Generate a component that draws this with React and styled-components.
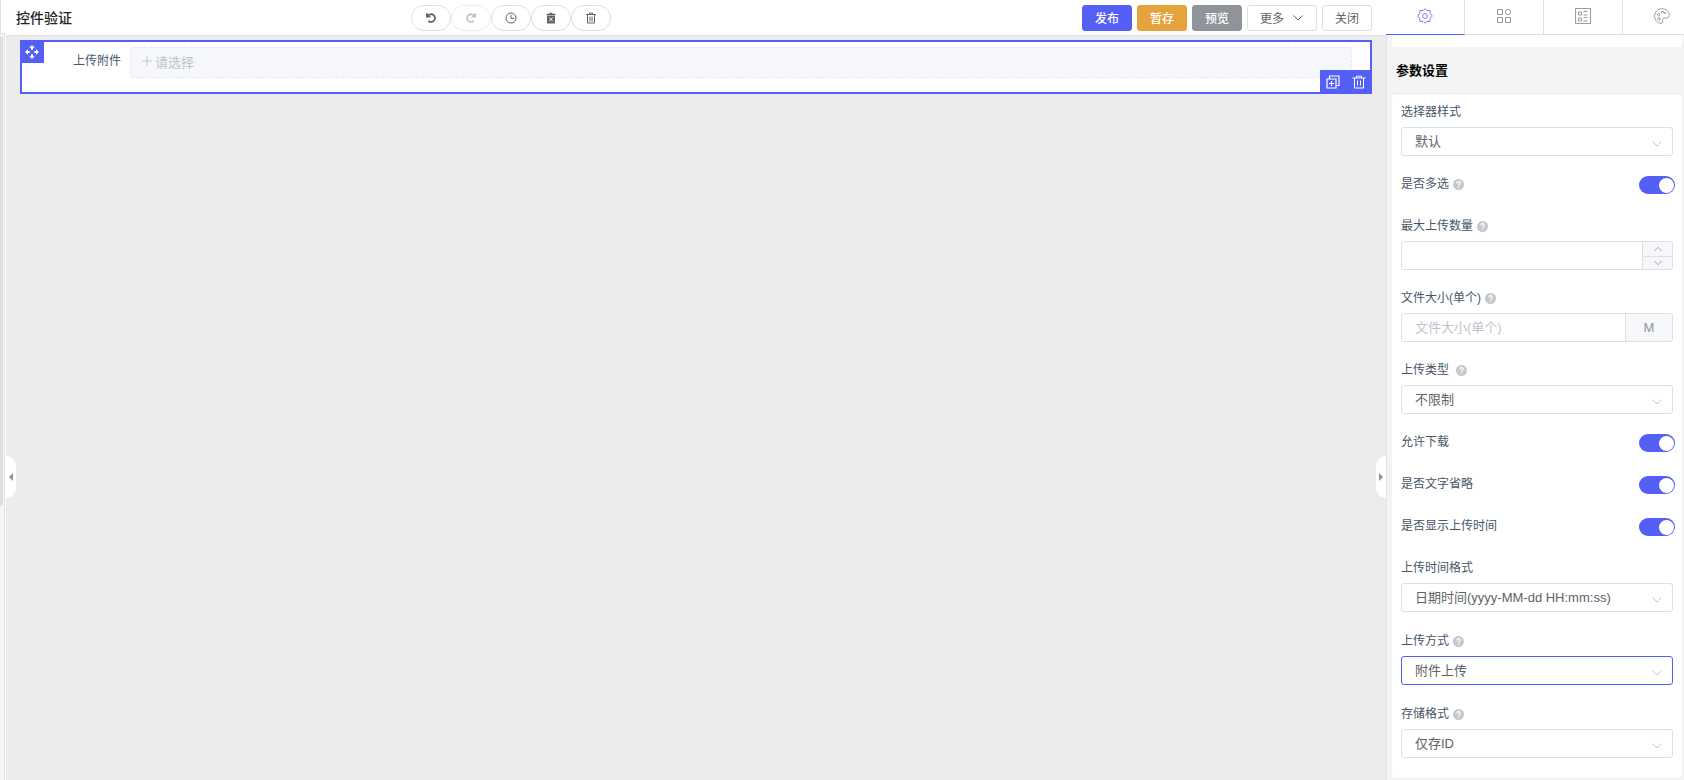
import React, { useState, useId } from "react";
import styled, { createGlobalStyle, css } from "styled-components";

const Global = createGlobalStyle`
  *, *::before, *::after { box-sizing: border-box; }
  body { margin: 0; font-family: "Liberation Sans", "Noto Sans CJK SC", sans-serif; font-size: 12px; color: #606266; }
  button, input, select { font-family: inherit; margin: 0; }
  h1, h2 { margin: 0; }
`;

const primary = "#535ff5";
const line = "#dcdfe6";

const Page = styled.div`
  display: grid;
  grid-template-columns: 6px minmax(0, 1fr) 298px;
  height: 100vh;
  overflow: hidden;
  background: #ececec;
`;

const LeftRail = styled.div`
  display: flex;
  flex-direction: column;
  background: #fff;
`;
const RailTop = styled.div`
  flex: none;
  height: 34px;
  border-left: 1px solid #e0e3ef;
  border-bottom: 1px solid #e0e3ef;
`;
const RailTrack = styled.div`
  flex: 1;
  margin-right: 1px;
  padding-top: 2px;
  border-right: 1px solid #e0e3ef;
  background: #f4f5f8;
`;
const RailThumb = styled.div`
  height: 470px;
  width: 3px;
  border-radius: 0 3px 3px 0;
  background: #dfdfe2;
`;

const Main = styled.main`
  position: relative;
  display: flex;
  flex-direction: column;
  min-width: 0;
`;

const Toolbar = styled.header`
  display: grid;
  grid-template-columns: 395px auto 1fr;
  align-items: center;
  height: 36px;
  padding: 0 14px 0 10px;
  background: #fff;
  border-bottom: 1px solid #e4e4e4;
`;
const Title = styled.h1`
  font-size: 14px;
  line-height: 20px;
  font-weight: 500;
  color: #222;
`;
const History = styled.div`
  display: flex;
`;
const Pill = styled.button`
  display: grid;
  place-items: center;
  width: 40px;
  height: 26px;
  padding: 0;
  border: 1px solid ${(p) => (p.disabled ? "#ebeef5" : line)};
  border-radius: 13px;
  background: #fff;
  color: ${(p) => (p.disabled ? "#c0c4cc" : "#606266")};
`;
const Actions = styled.div`
  display: flex;
  justify-content: flex-end;
  gap: 5px;
`;
const tones = { primary, warning: "#e6a23c", info: "#909399" };
const Action = styled.button`
  display: flex;
  align-items: center;
  justify-content: center;
  gap: 8px;
  height: 26px;
  padding: 0 12px;
  border: 1px solid ${(p) => tones[p.$tone] || line};
  border-radius: 3px;
  background: ${(p) => tones[p.$tone] || "#fff"};
  color: ${(p) => (p.$tone ? "#fff" : "#606266")};
  font-size: 12px;
  font-weight: ${(p) => (p.$tone ? 500 : 400)};
`;

const Canvas = styled.section`
  flex: 1;
  padding: 4px 14px;
`;
const Widget = styled.div`
  position: relative;
  display: flex;
  align-items: flex-start;
  height: 54px;
  padding: 5px 18px 0 51px;
  border: 2px solid ${primary};
  background: #fff;
`;
const WidgetLabel = styled.label`
  flex: none;
  width: 57px;
  line-height: 28px;
  color: #475669;
`;
const Picker = styled.button`
  flex: 1;
  display: flex;
  align-items: center;
  gap: 2px;
  height: 31px;
  padding: 0 10px 3px;
  border: 1px dashed #e4e7ed;
  border-radius: 4px;
  background: #f5f7fa;
  color: #c0c4cc;
  font-size: 13px;
`;
const DragHandle = styled.button`
  position: absolute;
  top: -2px;
  left: -2px;
  display: grid;
  place-items: center;
  width: 24px;
  height: 23px;
  padding: 0;
  border: 0;
  background: ${primary};
  color: #fff;
`;
const WidgetTools = styled.div`
  position: absolute;
  right: -2px;
  bottom: -2px;
  display: flex;
  background: ${primary};
`;
const Tool = styled.button`
  display: grid;
  place-items: center;
  width: 26px;
  height: 24px;
  padding: 0;
  border: 0;
  background: none;
  color: #fff;
`;

const Fold = styled.button`
  position: absolute;
  top: calc(50% + 87px);
  ${(p) => (p.$side === "left" ? "left: 0; border-radius: 0 10px 10px 0;" : "right: 0; border-radius: 10px 0 0 10px;")}
  transform: translateY(-50%);
  display: grid;
  place-items: center;
  width: 10px;
  height: 42px;
  padding: 0;
  border: 0;
  background: #fff;
  color: #909399;
`;

const Panel = styled.aside`
  display: flex;
  flex-direction: column;
  min-width: 0;
  height: 100vh;
  overflow: hidden;
  background: #f4f4f4;
`;
const Tabs = styled.div`
  flex: none;
  display: flex;
  height: 35px;
  background: #fff;
`;
const Tab = styled.button`
  flex: none;
  display: grid;
  place-items: center;
  width: 79px;
  padding: 0 0 2px;
  border: 0;
  border-right: 1px solid ${line};
  border-bottom: 1px solid ${(p) => (p.$active ? primary : line)};
  background: #fff;
  color: ${(p) => (p.$active ? "#7780f7" : "#9a9ca2")};
`;
const PanelBody = styled.div`
  flex: 1;
  padding: 0 2px 0 5px;
  border-left: 1px solid #e2e4f0;
  overflow: hidden;
`;
const CardEnd = styled.div`
  height: 12px;
  border-radius: 0 0 4px 4px;
  background: #fff;
`;
const Heading = styled.h2`
  height: 47px;
  padding-left: 4px;
  border-bottom: 1px solid #ebebeb;
  font-size: 13px;
  font-weight: 700;
  line-height: 48px;
  color: #000;
`;
const Card = styled.form`
  display: flex;
  flex-direction: column;
  padding: 8px 9px 20px;
  border-radius: 4px;
  background: #fff;
`;
const Field = styled.div`
  height: ${(p) => p.$h || 72}px;
`;
const LabelLine = styled.div`
  display: flex;
  align-items: center;
  gap: 4px;
  height: 20px;
  margin-bottom: 5px;
  color: #475669;
  label { line-height: 20px; }
`;
const SwitchRow = styled.div`
  display: flex;
  justify-content: space-between;
  align-items: flex-start;
  height: 42px;
  margin-right: -2px;
`;
const boxed = css`
  width: 100%;
  height: 29px;
  border: 1px solid ${(p) => (p.$active ? primary : line)};
  border-radius: 3px;
  background: #fff;
`;
const SelectBox = styled.div`
  display: grid;
  align-items: center;
  > * { grid-area: 1 / 1; }
  > svg { justify-self: end; margin: 4px 10px 0 0; color: #c0c4cc; pointer-events: none; }
`;
const Select = styled.select`
  ${boxed}
  appearance: none;
  padding: 0 30px 0 13px;
  color: #606266;
  font-size: 13px;
  outline: none;
`;
const Group = styled.div`
  ${boxed}
  display: flex;
  overflow: hidden;
`;
const Input = styled.input`
  flex: 1;
  min-width: 0;
  padding: 0 13px;
  border: 0;
  outline: none;
  background: #fff;
  color: #606266;
  font-size: 13px;
  &::placeholder { color: #c0c4cc; opacity: 1; }
`;
const Unit = styled.span`
  display: grid;
  place-items: center;
  width: 47px;
  border-left: 1px solid ${line};
  background: #f5f7fa;
  color: #909399;
  font-size: 13px;
`;
const Steps = styled.div`
  display: grid;
  grid-template-rows: 1fr 1fr;
  width: 30px;
  border-left: 1px solid ${line};
  background: #f5f7fa;
`;
const Step = styled.button`
  display: grid;
  place-items: center;
  padding: 0;
  border: 0;
  background: none;
  color: #909399;
  & + & { border-top: 1px solid ${line}; }
`;
const Switch = styled.input`
  appearance: none;
  flex: none;
  width: 36px;
  height: 18px;
  margin: 2px 0 0;
  padding: 2px 1px 1px 2px;
  border-radius: 9px;
  background: ${line};
  &::before {
    content: "";
    display: block;
    width: 15px;
    height: 15px;
    border-radius: 50%;
    background: #fff;
  }
  &:checked { background: ${primary}; }
  &:checked::before { margin-left: auto; }
`;

const Svg = ({ size = 12, box = 16, children, w = 1 }) => (
  <svg width={size} height={size} viewBox={`0 0 ${box} ${box}`} fill="none" stroke="currentColor" strokeWidth={w} aria-hidden="true">
    {children}
  </svg>
);
const Chevron = ({ up, size = 12 }) => (
  <Svg size={size} box={12}><path d={up ? "M1.5 8.5 6 4l4.500 4.500" : "M1.5 3.5 6 8l4.500-4.500"} /></Svg>
);
const Undo = () => (
  <Svg size={12} box={12} w={1.7}><path d="M1.800 1.200v3.400h3.600M2.200 4.400C3 2.900 4.400 2.200 6.200 2.200a3.900 3.900 0 1 1-2.800 6.800" /></Svg>
);
const Redo = () => (
  <Svg size={12} box={12} w={1.7}><path d="M10.200 1.200v3.400H6.600M9.800 4.400C9 2.900 7.600 2.200 5.800 2.200a3.900 3.900 0 1 0 2.800 6.800" /></Svg>
);
const Clock = () => (
  <Svg box={12}><circle cx="6" cy="6" r="5" /><path d="M6 2.8V6.4h3.2" /></Svg>
);
const Clear = () => (
  <Svg box={12}>
    <path d="M2 3.500h8v8H2zM1.500 1.800h9V3h-9zM4.500.8h3v1h-3z" fill="currentColor" stroke="none" />
    <path d="m4.200 5.500 3.600 3.800m0-3.800L4.200 9.300" stroke="#fff" />
  </Svg>
);
const TrashLight = () => (
  <Svg box={12}>
    <path d="M1 2.500h10M4.500 2.500v-1.500h3v1.500M2.500 2.500v8.500h7v-8.500" />
    <path d="M4.700 4.500v5M6 4.500v5M7.300 4.500v5" strokeWidth="0.7" />
  </Svg>
);
const Trash = ({ size = 14 }) => (
  <Svg size={size} box={14}><path d="M.5 3h13M4.500 3V1.200h5V3M2.500 3v10h9V3M5.500 5.500v5M8.500 5.500v5" /></Svg>
);
const Move = () => (
  <Svg size={14} box={14}>
    <path fill="currentColor" stroke="none" d="M7 0l2.800 3H8v1.800H6V3H4.200zM7 14l2.800-3H8V9.200H6V11H4.200zM0 7l3-2.800V6h1.800v2H3v1.800zM14 7l-3-2.800V6H9.200v2H11v1.800z" />
  </Svg>
);
const Copy = () => (
  <Svg size={14} box={14} w={1.2}><path d="M1 4h9v9H1zM3.500 4V1H13v9.500h-3M5.500 6v5M3 8.500h5" /></Svg>
);
const Plus = () => (
  <Svg size={12} box={12}><path d="M6 1v10M1 6h10" /></Svg>
);
const Gear = () => (
  <Svg size={16} box={16}>
    <circle cx="8" cy="8" r="2.400" />
    <path strokeLinejoin="round" d="M8 .7 10 2.600l3.100-.1.100 3L15.300 8l-2.100 2.300-.1 3.100-3.100-.1-2 2-2-2-3.100.1-.1-3.100L.7 8l2.100-2.500.1-3 3.100.1z" />
  </Svg>
);
const Blocks = () => (
  <Svg size={16} box={16}><path d="M1.500 1.500h5v5h-5zM1.500 9.500h5v5h-5zM9.500 9.500h5v5h-5z" /><circle cx="12" cy="4" r="2.600" /></Svg>
);
const FormIcon = () => (
  <Svg size={16} box={16}><path d="M.5.5h15v15H.5zM3.500 4h3v3h-3zM3.500 10h3v3h-3zM8.500 3.500h4M8.500 7h4M8.500 9.500h4M8.500 13h4" /></Svg>
);
const Palette = () => (
  <Svg size={16} box={16}>
    <path d="M8 .7C3.800.7.6 4 .6 8s3 7.300 6.400 7.300c1.700 0 1.800-1 1.600-2.300-.3-2 .7-3 2.500-2.900 2.300.2 4.200-.2 4.200-2.600C15.300 3.500 12 .7 8 .7z" />
    <circle cx="4.600" cy="6.500" r="1.200" /><circle cx="5" cy="10.800" r="1.200" /><path d="M7.500 5V3.500h1.800V5M10.300 5.800V4.500h1.500v1.300" />
  </Svg>
);
const Arrow = ({ left }) => (
  <svg width="4" height="8" viewBox="0 0 4 8" aria-hidden="true"><path fill="currentColor" d={left ? "M4 0v8L0 4z" : "M0 0v8l4-4z"} /></svg>
);
const HelpMark = () => (
  <Svg size={11} box={11}>
    <circle cx="5.500" cy="5.500" r="5.500" fill="#c6c8d0" stroke="none" />
    <path d="M3.900 4.400C3.900 3.200 4.600 2.700 5.500 2.700s1.700.5 1.700 1.500C7.200 5.300 5.500 5.300 5.500 6.600M5.500 7.500v1.300" stroke="#fff" strokeWidth="1.300" />
  </Svg>
);

function SelectField({ label, value, help, active, h }) {
  const id = useId();
  return (
    <Field $h={h}>
      <LabelLine><label htmlFor={id}>{label}</label>{help && <HelpMark />}</LabelLine>
      <SelectBox>
        <Select id={id} $active={active} defaultValue={value}><option>{value}</option></Select>
        <Chevron />
      </SelectBox>
    </Field>
  );
}

function SwitchField({ label, help }) {
  const id = useId();
  const [on, setOn] = useState(true);
  return (
    <SwitchRow>
      <LabelLine><label htmlFor={id}>{label}</label>{help && <HelpMark />}</LabelLine>
      <Switch id={id} type="checkbox" role="switch" checked={on} onChange={() => setOn(!on)} />
    </SwitchRow>
  );
}

export default function App() {
  return (
    <>
      <Global />
      <Page>
        <LeftRail><RailTop /><RailTrack><RailThumb /></RailTrack></LeftRail>
        <Main>
          <Toolbar>
            <Title>控件验证</Title>
            <History>
              <Pill aria-label="撤销"><Undo /></Pill>
              <Pill aria-label="重做" disabled><Redo /></Pill>
              <Pill aria-label="历史"><Clock /></Pill>
              <Pill aria-label="清空"><Clear /></Pill>
              <Pill aria-label="删除"><TrashLight /></Pill>
            </History>
            <Actions>
              <Action $tone="primary">发布</Action>
              <Action $tone="warning">暂存</Action>
              <Action $tone="info">预览</Action>
              <Action>更多<Chevron /></Action>
              <Action>关闭</Action>
            </Actions>
          </Toolbar>
          <Canvas>
            <Widget>
              <WidgetLabel htmlFor="attachment">上传附件</WidgetLabel>
              <Picker id="attachment"><Plus />请选择</Picker>
              <DragHandle aria-label="移动"><Move /></DragHandle>
              <WidgetTools>
                <Tool aria-label="复制"><Copy /></Tool>
                <Tool aria-label="删除"><Trash /></Tool>
              </WidgetTools>
            </Widget>
          </Canvas>
          <Fold $side="left" aria-label="收起左栏"><Arrow left /></Fold>
          <Fold $side="right" aria-label="收起右栏"><Arrow /></Fold>
        </Main>
        <Panel>
          <Tabs role="tablist">
            <Tab role="tab" aria-label="属性" $active><Gear /></Tab>
            <Tab role="tab" aria-label="组件"><Blocks /></Tab>
            <Tab role="tab" aria-label="表单"><FormIcon /></Tab>
            <Tab role="tab" aria-label="主题"><Palette /></Tab>
          </Tabs>
          <PanelBody>
            <CardEnd />
            <Heading>参数设置</Heading>
            <Card>
              <SelectField label="选择器样式" value="默认" />
              <SwitchField label="是否多选" help />
              <Field>
                <LabelLine><label htmlFor="max">最大上传数量</label><HelpMark /></LabelLine>
                <Group>
                  <Input id="max" />
                  <Steps>
                    <Step type="button" aria-label="增加"><Chevron up size={10} /></Step>
                    <Step type="button" aria-label="减少"><Chevron size={10} /></Step>
                  </Steps>
                </Group>
              </Field>
              <Field>
                <LabelLine><label htmlFor="size">文件大小(单个)</label><HelpMark /></LabelLine>
                <Group><Input id="size" placeholder="文件大小(单个)" /><Unit>M</Unit></Group>
              </Field>
              <SelectField label={"上传类型\u00a0"} value="不限制" help />
              <SwitchField label="允许下载" />
              <SwitchField label="是否文字省略" />
              <SwitchField label="是否显示上传时间" />
              <SelectField label="上传时间格式" value="日期时间(yyyy-MM-dd HH:mm:ss)" h={73} />
              <SelectField label="上传方式" value="附件上传" help active h={73} />
              <SelectField label="存储格式" value="仅存ID" help h={54} />
            </Card>
          </PanelBody>
        </Panel>
      </Page>
    </>
  );
}
